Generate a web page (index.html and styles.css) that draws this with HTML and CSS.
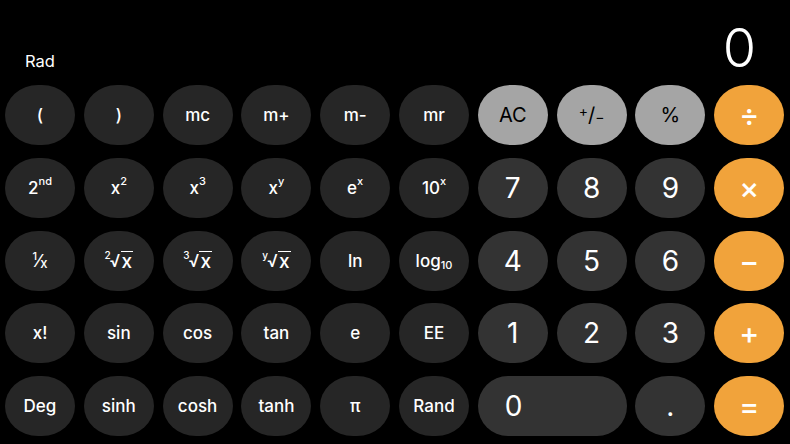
FILE: index.html
```html
<!DOCTYPE html>
<html>
<head>
<meta charset="utf-8">
<link rel="stylesheet" href="styles.css">
</head>
<body>
<div class="calc">
  <div class="header">
    <div class="mode">Rad</div>
    <div class="display">0</div>
  </div>
  <div class="keys">
    <div class="key fn">(</div>
    <div class="key fn">)</div>
    <div class="key fn">mc</div>
    <div class="key fn">m+</div>
    <div class="key fn">m-</div>
    <div class="key fn">mr</div>
    <div class="key lt">AC</div>
    <div class="key lt pm"><sup>+</sup>/<sub>−</sub></div>
    <div class="key lt">%</div>
    <div class="key op">÷</div>

    <div class="key fn">2<sup>nd</sup></div>
    <div class="key fn">x<sup>2</sup></div>
    <div class="key fn">x<sup>3</sup></div>
    <div class="key fn">x<sup>y</sup></div>
    <div class="key fn">e<sup>x</sup></div>
    <div class="key fn">10<sup>x</sup></div>
    <div class="key num">7</div>
    <div class="key num">8</div>
    <div class="key num">9</div>
    <div class="key op">×</div>

    <div class="key fn frac"><sup>1</sup>⁄<sub>x</sub></div>
    <div class="key fn"><sup class="ri">2</sup>√<span class="ov">x</span></div>
    <div class="key fn"><sup class="ri">3</sup>√<span class="ov">x</span></div>
    <div class="key fn"><sup class="ri">y</sup>√<span class="ov">x</span></div>
    <div class="key fn">ln</div>
    <div class="key fn">log<sub>10</sub></div>
    <div class="key num">4</div>
    <div class="key num">5</div>
    <div class="key num">6</div>
    <div class="key op">−</div>

    <div class="key fn">x!</div>
    <div class="key fn">sin</div>
    <div class="key fn">cos</div>
    <div class="key fn">tan</div>
    <div class="key fn">e</div>
    <div class="key fn">EE</div>
    <div class="key num">1</div>
    <div class="key num">2</div>
    <div class="key num">3</div>
    <div class="key op">+</div>

    <div class="key fn">Deg</div>
    <div class="key fn">sinh</div>
    <div class="key fn">cosh</div>
    <div class="key fn">tanh</div>
    <div class="key fn">π</div>
    <div class="key fn">Rand</div>
    <div class="key num zero">0</div>
    <div class="key num">.</div>
    <div class="key op">=</div>
  </div>
</div>
</body>
</html>
```
FILE: styles.css
```css
html, body {
  margin: 0;
  padding: 0;
  background: #000;
}
body {
  width: 790px;
  height: 444px;
  overflow: hidden;
  font-family: Inter, "Noto Sans", sans-serif;
  color: #fff;
}
.calc {
  padding: 0 6px 0 5px;
}
.header {
  height: 85px;
  display: flex;
  justify-content: space-between;
  align-items: flex-end;
}
.mode {
  font-size: 16.5px;
  padding-left: 20px;
  margin-bottom: 14px;
}
.display {
  font-size: 54px;
  font-weight: 300;
  line-height: 1;
  padding-right: 28px;
  margin-bottom: 10px;
}
.keys {
  display: grid;
  grid-template-columns: repeat(10, 70px);
  grid-auto-rows: 60px;
  column-gap: 8.8px;
  row-gap: 12.8px;
}
.key {
  border-radius: 33px / 30px;
  display: flex;
  align-items: center;
  justify-content: center;
  font-size: 17px;
  font-weight: 500;
}
.fn {
  background: #262626;
}
.num {
  background: #333333;
  font-size: 28px;
  font-weight: 400;
}
.lt {
  background: #a5a5a5;
  color: #000;
  font-size: 20px;
  font-weight: 400;
}
.op {
  background: #f1a33b;
  font-size: 30px;
  font-weight: 500;
}
.zero {
  grid-column: span 2;
  justify-content: flex-start;
  padding-left: 27px;
  border-radius: 30px;
}
sup {
  font-size: 11px;
  vertical-align: 0;
  position: relative;
  top: -7px;
}
sub {
  font-size: 11px;
  vertical-align: 0;
  position: relative;
  top: 4px;
}
.pm sup, .pm sub {
  font-size: 14px;
}
.pm sup { top: -5px; }
.pm sub { top: 1px; }
.ri {
  font-size: 10px;
  margin-right: -1px;
  top: -6px;
}
.ov {
  border-top: 1.5px solid #fff;
  line-height: 1;
  padding: 0 1px;
  font-size: 19px;
}
.frac sub { font-size: 13px; top: 2px; }
.frac sup { top: -5px; }
```
